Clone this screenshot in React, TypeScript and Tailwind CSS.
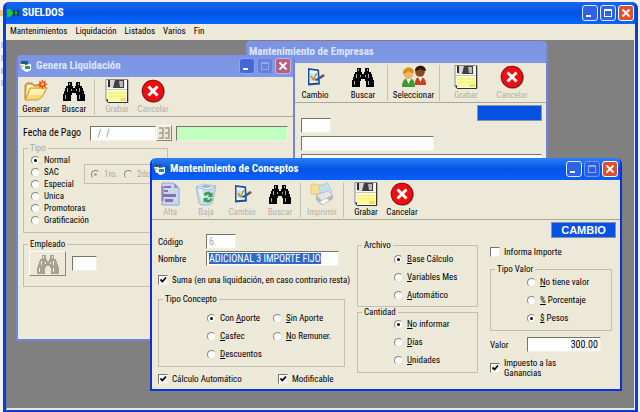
import { useEffect, useRef } from "react";
import type { ReactNode } from "react";

/* ---------- icons ---------- */

function FolderIcon() {
  return (
    <svg width="24" height="24" viewBox="0 0 24 24" aria-hidden="true">
      <path d="M1 20V6l2-2h5l2 2h8v4" fill="#e9b44c" stroke="#a8741c" strokeWidth="0.8" />
      <path d="M3 6h5l2 2h7v4H5l-3 6z" fill="#fff3c4" />
      <path d="M1 21 6 9h17l-5 9-4 3z" fill="#ffd978" stroke="#b98222" strokeWidth="0.8" />
      <path d="M7 10h14l-3 6c-5-1-8 1-13 0z" fill="#ffefb0" />
      <path d="m18.500 0 1 3 2.500-1.500-.8 2.800 2.800.7-2.800 1.200 1 2.800-2.700-1.500-1 3-1-3-2.500 1.500.8-2.800-2.800-1 2.800-.9-1-2.600 2.500 1.300z" fill="#e8481c" />
      <circle cx="18.500" cy="5" r="1.800" fill="#ffc23c" />
    </svg>
  );
}

function BinocularsIcon({ muted = false }: { muted?: boolean }) {
  const body = muted ? "#a5a294" : "#000";
  const gloss = muted ? "#f3f1e6" : "#a9a9a4";
  return (
    <svg width="24" height="24" viewBox="0 0 24 24" aria-hidden="true">
      <path d="M6 3h4v4h1v2h2V7h1V3h4v4h2v2h1v3h1v3h1v7h-8v-6h-1v-2h-4v2H9v6H1v-7h1v-3h1V9h1V7h2z" fill={body} />
      <path d="M7 4h1v2H7zM5 9h1v4H5zM3 16h1v4H3zM16 4h1v2h-1zM17 9h1v4h-1zM17 16h1v4h-1zM9 10h1v2H9zM14 10h1v2h-1z" fill={gloss} />
    </svg>
  );
}

function FloppyIcon() {
  return (
    <svg width="24" height="24" viewBox="0 0 24 24" aria-hidden="true">
      <path d="M1 .5h22v23H3L1 21.500z" fill="#fafaf7" stroke="#8a8a84" />
      <rect x="3.500" y="1" width="16" height="8" fill="#d5d5d2" />
      <path d="M3 1h2v7H3z" fill="#2b2b2b" />
      <path d="M10 1h9v8H8z" fill="#3e3e44" />
      <path d="M14 2h4v6h-3z" fill="#b9b9b9" />
      <path d="M2 10.500h20" stroke="#c5c5bd" />
      <rect x="3" y="12" width="18" height="10" fill="#fdfb9c" />
      <path d="M3 14h18M3 17h18" stroke="#f0ec72" />
      <path d="M16 19h5v3h-6z" fill="#efe24e" />
      <path d="M1 20.500h2v3z" fill="#111" />
      <path d="M22.500 1v22.500H3" fill="none" stroke="#33332f" />
    </svg>
  );
}

function CancelIcon() {
  return (
    <svg width="24" height="24" viewBox="0 0 24 24" aria-hidden="true">
      <circle cx="12.800" cy="12.800" r="11" fill="#8d8b80" />
      <circle cx="12" cy="12" r="11.300" fill="#7d0a0a" />
      <circle cx="12" cy="12" r="10.500" fill="#ee0e12" />
      <path d="m7.500 7.500 9 9m0-9-9 9" stroke="#fff" strokeWidth="3" />
    </svg>
  );
}

function EditIcon() {
  return (
    <svg width="24" height="24" viewBox="0 0 24 24" aria-hidden="true">
      <path d="m5 3 11 1.500 1 15L5 20.500z" fill="#1a4fa3" />
      <path d="m6.500 5 8 1 .7 11.500-8.700.8z" fill="#f4faff" />
      <path d="m7 8 6 .5v7l-6 .5z" fill="#c8e2f5" />
      <path d="m8 11 2.500 4L14 8" fill="none" stroke="#c49016" strokeWidth="1.500" />
      <path d="m11 15 8-5 2 1.500-7 4.500z" fill="#1d5fb4" />
      <path d="m18 10.500 2-1.500 2 1.500-2 2z" fill="#b0492c" />
      <path d="m10 16 1.500-2 1.500 2z" fill="#f0b73a" />
    </svg>
  );
}

function PeopleIcon() {
  return (
    <svg width="26" height="24" viewBox="0 0 26 24" aria-hidden="true">
      <path d="M14 20c0-5 1-8 5-8s6 3 6 8z" fill="#c8401c" />
      <path d="m17 12 2.500 5 2-5z" fill="#fff" />
      <circle cx="19" cy="7" r="4.800" fill="#8a4a21" />
      <path d="M14 6c0-7 11-7 11 0-2 0-4-1-6-2-2 1-3 2-5 2z" fill="#2e1708" />
      <path d="M1 22c0-6 2-8.500 6.500-8.500S14 16 14 22z" fill="#3c9a35" />
      <path d="m5.500 14 2 5 2.500-5z" fill="#fff" />
      <circle cx="7.500" cy="9" r="4.800" fill="#f2b36a" />
      <path d="M2 9c-1-8 11-9 11-1-2 0-4-1-5.500-2C6 8 4 8 2 9z" fill="#dd8c14" />
    </svg>
  );
}

function DocumentIcon() {
  return (
    <svg width="24" height="24" viewBox="0 0 24 24" aria-hidden="true">
      <path d="M4 1h12l5 5v17H4z" fill="#c4d2f4" stroke="#8093d2" />
      <path d="M16 1v5h5z" fill="#6f88dc" />
      <path d="M6 4h7v2H6zM6 8h4v2H6zM4 12h14v3H4zM7 17h8v3H7z" fill="#6a55ae" />
      <path d="M4.500 4v15" stroke="#8c62b2" strokeWidth="2" />
    </svg>
  );
}

function RecycleIcon() {
  return (
    <svg width="24" height="24" viewBox="0 0 24 24" aria-hidden="true">
      <path d="m2 5 20-1-3.500 17L15 23H7l-2-2z" fill="#b7d9ef" stroke="#7fa9cc" strokeWidth="0.800" />
      <path d="m4 7 4 14h4L8 7z" fill="#e2f2fb" />
      <path d="m2 5 7-3 13 2-8 4z" fill="#eff8fd" stroke="#80abd0" strokeWidth="0.800" />
      <path d="m6 5 4-2 8 1-4 2z" fill="#75a4cc" />
      <path d="M9.500 12.500C11 9 16 9 17 11.500l1.500-1.500v5H14l1.200-1.500c-1-1.200-3-1-3.400.5zM18.500 16.500c-.5 4-5 5-7.500 3l-1.500 1.500v-5h5L13 17.500c1.200.8 3 .5 3-1z" fill="#168a30" />
    </svg>
  );
}

function PrinterIcon() {
  return (
    <svg width="24" height="24" viewBox="0 0 24 24" aria-hidden="true">
      <path d="M1 2h5l1 1h4v9H1z" fill="#fbdc82" stroke="#d6aa48" strokeWidth="0.600" />
      <path d="m9 4 9-3 4 9-11 4z" fill="#bfdcf6" stroke="#8fb3d8" strokeWidth="0.600" />
      <path d="m6 13 12-4 5 4-11 6z" fill="#e3e5ea" stroke="#9598a0" strokeWidth="0.600" />
      <path d="M6 13v5l6 5v-4zM12 19l11-6v4l-11 6z" fill="#a9acb6" />
      <path d="m9 20 7-4 4 2-7 5z" fill="#f7f8fb" stroke="#8b9099" strokeWidth="0.500" />
    </svg>
  );
}

function FormIcon() {
  return (
    <svg width="12" height="12" viewBox="0 0 12 12" aria-hidden="true">
      <path d="M1 1h7v6H1z" fill="#1f5a80" />
      <path d="M0 4h5v6H2z" fill="#e8f4f4" />
      <path d="m5 5 6-1v6l-4 2-3-1z" fill="#fff" />
      <path d="M5 6h5v3H5z" fill="#2f8f8f" />
      <path d="M1 5h2v2H1z" fill="#e6cf3c" />
    </svg>
  );
}

function AppIcon() {
  return (
    <svg width="13" height="8" viewBox="0 0 13 8" aria-hidden="true">
      <path d="M0 0h3l3 3v2L3 8H0z" fill="#18c838" />
      <path d="M6 1h2v6H6zM10 1h2v6h-2z" fill="#0d4a3f" />
      <path d="M8 3h2v2H8z" fill="#24b055" />
    </svg>
  );
}

/* ---------- window parts ---------- */

type CaptionKind = "min" | "max" | "close";

const captionName = { min: "Minimizar", max: "Maximizar", close: "Cerrar" };

function CaptionButton({ kind, dim = false, inactive = false }: { kind: CaptionKind; dim?: boolean; inactive?: boolean }) {
  const red = inactive ? "border-[#c5b6df] bg-[#b4607f]" : "border-white bg-[#e0502c]";
  const blue = inactive ? "border-[#8fa5ec] bg-[#4468d6]" : "border-[#dfe9ff] bg-[#2f62e4]";
  const faded = inactive ? "border-[#849ae6] bg-[#6680dc]" : "border-[#6f97f2] bg-[#2a5fe2]";
  return (
    <button
      type="button"
      aria-label={captionName[kind]}
      className={`flex size-4 items-center justify-center rounded-[3px] border ${kind === "close" ? red : dim ? faded : blue}`}
    >
      <svg width="10" height="10" viewBox="0 0 10 10" aria-hidden="true">
        {kind === "min" && <path d="M1 7h5v2H1z" fill="#fff" />}
        {kind === "max" && (
          <path d="M1 1h8v8H1zM2 3v5h6V3z" fillRule="evenodd" fill={dim ? "#8fa9ee" : "#fff"} />
        )}
        {kind === "close" && <path d="m1.500 1.500 7 7m0-7-7 7" stroke="#fff" strokeWidth="1.800" />}
      </svg>
    </button>
  );
}

function ChildWindow({
  place,
  title,
  active = false,
  bare = false,
  children,
}: {
  place: string;
  title: string;
  active?: boolean;
  bare?: boolean;
  children: ReactNode;
}) {
  const frame = active ? "border-[#0831d9]" : "border-[#7581dc]";
  const bar = active
    ? "bg-linear-to-b from-[#2a80f8] via-[#0453e2] to-[#0560fa] text-white"
    : "bg-linear-to-b from-[#7d92e4] via-[#7b96e2] to-[#8099e6] text-[#dce4fa]";
  return (
    <section className={`absolute flex flex-col overflow-hidden rounded-t-md border-x-2 border-b-2 bg-[#ece9d8] ${frame} ${place}`}>
      <header className={`flex h-[22px] shrink-0 items-center gap-1 px-0.5 ${bar}`}>
        {!bare && <FormIcon />}
        <h2 className="flex-1 text-[11px] leading-4 font-bold whitespace-nowrap">{title}</h2>
        {!bare && (
          <div className="flex gap-0.5">
            <CaptionButton kind="min" inactive={!active} />
            <CaptionButton kind="max" dim inactive={!active} />
            <CaptionButton kind="close" inactive={!active} />
          </div>
        )}
      </header>
      {children}
    </section>
  );
}

function Tool({ icon, label, width, disabled = false, faded = false }: { icon: ReactNode; label: string; width: string; disabled?: boolean; faded?: boolean }) {
  return (
    <button
      type="button"
      disabled={disabled}
      className={`flex flex-col items-center leading-3 whitespace-nowrap ${width} ${disabled ? "text-[#b5b2a3]" : "text-black"}`}
    >
      <span className={faded ? "opacity-80" : ""}>{icon}</span>
      {label}
    </button>
  );
}

function Toolbar({ children }: { children: ReactNode }) {
  return (
    <div role="toolbar" className="flex h-10 shrink-0 items-center border-b border-[#aca899]">
      {children}
    </div>
  );
}

function Separator() {
  return <span className="h-9 w-px bg-[#c5c2b2]" />;
}

/* ---------- form parts ---------- */

const field =
  "block h-[15px] border border-t-[#77756a] border-l-[#77756a] border-r-[#f1efe2] border-b-[#f1efe2] bg-white px-0.5 text-[10px] outline-none";

function Choice({ name, children, checked = false, disabled = false }: { name: string; children: ReactNode; checked?: boolean; disabled?: boolean }) {
  return (
    <label className={`flex items-center gap-1 whitespace-nowrap ${disabled ? "text-[#aca899]" : ""}`}>
      <input
        type="radio"
        name={name}
        defaultChecked={checked}
        disabled={disabled}
        className="flex size-[9px] shrink-0 appearance-none items-center justify-center rounded-full border border-t-[#8a887c] border-r-[#e6e3d3] border-b-[#e6e3d3] border-l-[#8a887c] bg-white before:size-[3px] before:rounded-full checked:before:bg-black disabled:bg-[#ece9d8] disabled:checked:before:bg-[#aca899]"
      />
      <span>{children}</span>
    </label>
  );
}

function Tick({ children, checked = false }: { children: ReactNode; checked?: boolean }) {
  return (
    <label className="flex items-center gap-1 whitespace-nowrap">
      <span className="relative flex size-2.5 shrink-0">
        <input
          type="checkbox"
          defaultChecked={checked}
          className="peer size-2.5 appearance-none border border-t-[#77756a] border-r-[#f1efe2] border-b-[#f1efe2] border-l-[#77756a] bg-white"
        />
        <svg viewBox="0 0 10 10" className="pointer-events-none absolute inset-0 hidden peer-checked:block" aria-hidden="true">
          <path d="m2.500 4.500 2 2 3.500-4" fill="none" stroke="#000" strokeWidth="1.800" />
        </svg>
      </span>
      <span>{children}</span>
    </label>
  );
}

function Group({ title, className = "", muted = false, children }: { title: string; className?: string; muted?: boolean; children: ReactNode }) {
  return (
    <fieldset className={`border border-[#c2bfae] ${className}`}>
      <legend className={`ml-1 px-0.5 leading-[10px] ${muted ? "text-[#aca899]" : ""}`}>{title}</legend>
      {children}
    </fieldset>
  );
}

/* ---------- windows ---------- */

function Empresas() {
  return (
    <ChildWindow place="top-px left-[238px] h-[200px] w-[303px]" title="Mantenimiento de Empresas" bare>
      <Toolbar>
        <span className="w-11" />
        <Tool icon={<EditIcon />} label="Cambio" width="w-12" />
        <Tool icon={<BinocularsIcon />} label="Buscar" width="w-12" />
        <Separator />
        <Tool icon={<PeopleIcon />} label="Seleccionar" width="w-[51px]" />
        <Separator />
        <Tool icon={<FloppyIcon />} label="Grabar" width="w-[52px]" disabled />
        <Tool icon={<CancelIcon />} label="Cancelar" width="w-10" disabled />
      </Toolbar>
      <div className="flex flex-col gap-[3px] pt-0.5 pr-1 pl-[54px]">
        <div className="flex items-end justify-between">
          <input aria-label="Código de empresa" className={`${field} mt-3 w-[30px]`} />
          <div className="mb-3 h-4 w-[65px] border border-[#8592a8] bg-[#0451e4]" />
        </div>
        <input aria-label="Nombre de empresa" className={`${field} w-[133px]`} />
        <input aria-label="Domicilio" className={`${field} w-full`} />
      </div>
    </ChildWindow>
  );
}

function GeneraLiquidacion() {
  return (
    <ChildWindow place="top-[15px] left-[9px] h-[286px] w-[279px]" title="Genera Liquidación">
      <Toolbar>
        <Tool icon={<FolderIcon />} label="Generar" width="w-9" />
        <Tool icon={<BinocularsIcon />} label="Buscar" width="w-10" />
        <Separator />
        <Tool icon={<FloppyIcon />} label="Grabar" width="w-11" disabled />
        <Tool icon={<CancelIcon />} label="Cancelar" width="w-7" disabled />
      </Toolbar>
      <form className="flex flex-col px-[5px] pt-2">
        <div className="flex h-4 items-center">
          <label htmlFor="fecha" className="w-[67px] text-[10px]">
            Fecha de Pago
          </label>
          <input id="fecha" defaultValue="  /  /" className={`${field} w-[66px] whitespace-pre text-[#8a887c]`} />
          <button
            type="button"
            aria-label="Calendario"
            className="mr-1 flex size-4 items-center justify-center border border-t-white border-r-[#8a887c] border-b-[#8a887c] border-l-white bg-[#ece9d8]"
          >
            <svg width="12" height="12" viewBox="0 0 12 12" aria-hidden="true">
              <path d="M1 1h4v10H1M1 6h4M7 1h4v10H7M7 6h4" fill="none" stroke="#a09d8e" strokeWidth="1.500" />
            </svg>
          </button>
          <input aria-label="Período" readOnly className="block h-[15px] min-w-0 flex-1 border border-t-[#77756a] border-r-[#f1efe2] border-b-[#f1efe2] border-l-[#77756a] bg-[#c0ffc0]" />
        </div>
        <Group title="Tipo" className="mt-0.5 h-[90px] w-[145px]" muted>
          <div className="flex items-start pt-px pl-[7px] leading-3">
            <div className="flex w-[53px] flex-col">
              <Choice name="tipo" checked>Normal</Choice>
              <Choice name="tipo">SAC</Choice>
              <Choice name="tipo">Especial</Choice>
              <Choice name="tipo">Unica</Choice>
              <Choice name="tipo">Promotoras</Choice>
              <Choice name="tipo">Gratificación</Choice>
            </div>
            <div className="mt-2.5 flex h-5 w-20 items-center gap-1.5 border border-[#c2bfae] pl-1.5">
              <Choice name="cuota" checked disabled>1ro.</Choice>
              <Choice name="cuota" disabled>2do.</Choice>
            </div>
          </div>
        </Group>
        <Group title="Empleado" className="mt-1.5 h-12">
          <div className="flex items-center gap-1.5 pt-0.5 pl-[5px]">
            <button
              type="button"
              aria-label="Buscar empleado"
              className="flex h-[25px] w-[37px] items-center justify-center border border-t-white border-r-[#8a887c] border-b-[#8a887c] border-l-white"
            >
              <BinocularsIcon muted />
            </button>
            <input aria-label="Empleado" className={`${field} w-[25px]`} />
          </div>
        </Group>
      </form>
    </ChildWindow>
  );
}

function Conceptos() {
  const nombre = useRef<HTMLInputElement>(null);

  useEffect(() => {
    nombre.current?.focus();
    nombre.current?.select();
  }, []);

  return (
    <ChildWindow place="top-[118px] left-[143px] h-[233px] w-[472px]" title="Mantenimiento de Conceptos" active>
      <Toolbar>
        <Tool icon={<DocumentIcon />} label="Alta" width="w-9" disabled faded />
        <Tool icon={<RecycleIcon />} label="Baja" width="w-9" disabled faded />
        <Tool icon={<EditIcon />} label="Cambio" width="w-9" disabled />
        <Tool icon={<BinocularsIcon />} label="Buscar" width="w-10" disabled />
        <Separator />
        <Tool icon={<PrinterIcon />} label="Imprimir" width="w-[42px]" disabled faded />
        <Separator />
        <Tool icon={<FloppyIcon />} label="Grabar" width="w-11" />
        <Tool icon={<CancelIcon />} label="Cancelar" width="w-7" />
      </Toolbar>
      <form className="flex items-start pt-0.5 pr-1 pl-1.5">
        <div className="flex w-[199px] flex-col pt-3">
          <div className="flex items-center">
            <label htmlFor="codigo" className="w-12">Código</label>
            <input id="codigo" defaultValue="6" disabled className={`${field} w-[30px] text-[#aca899]`} />
          </div>
          <div className="mt-0.5 flex items-center">
            <label htmlFor="nombre" className="w-12">Nombre</label>
            <input
              id="nombre"
              ref={nombre}
              defaultValue="ADICIONAL 3 IMPORTE FIJO"
              className={`${field} w-[133px] selection:bg-[#316ac5] selection:text-white`}
            />
          </div>
          <div className="mt-2">
            <Tick checked>Suma (en una liquidación, en caso contrario resta)</Tick>
          </div>
          <Group title="Tipo Concepto" className="mt-2 mr-3">
            <div className="grid grid-cols-[66px_auto] pt-[5px] pb-[3px] pl-12 leading-[18px]">
              <Choice name="concepto" checked>Con <u>A</u>porte</Choice>
              <Choice name="concepto"><u>S</u>in Aporte</Choice>
              <Choice name="concepto"><u>C</u>asfec</Choice>
              <Choice name="concepto"><u>N</u>o Remuner.</Choice>
              <Choice name="concepto"><u>D</u>escuentos</Choice>
            </div>
          </Group>
          <div className="mt-1.5 flex">
            <div className="w-[120px]"><Tick checked>Cálculo Automático</Tick></div>
            <Tick checked>Modificable</Tick>
          </div>
        </div>
        <div className="flex w-[121px] flex-col pt-[18px]">
          <Group title="Archivo">
            <div className="flex flex-col pb-0.5 pl-9 leading-[18px]">
              <Choice name="archivo" checked><u>B</u>ase Cálculo</Choice>
              <Choice name="archivo"><u>V</u>ariables Mes</Choice>
              <Choice name="archivo"><u>A</u>utomático</Choice>
            </div>
          </Group>
          <Group title="Cantidad">
            <div className="-mt-0.5 flex flex-col pb-[3px] pl-9 leading-[18px]">
              <Choice name="cantidad" checked><u>N</u>o informar</Choice>
              <Choice name="cantidad"><u>D</u>ías</Choice>
              <Choice name="cantidad"><u>U</u>nidades</Choice>
            </div>
          </Group>
        </div>
        <div className="flex flex-1 flex-col pl-3">
          <output className="flex h-4 w-[65px] items-center justify-center self-end border border-[#8592a8] bg-[#0451e4] font-['Liberation_Sans',sans-serif] text-[11px] font-bold text-white">
            CAMBIO
          </output>
          <div className="mt-2"><Tick>Informa Importe</Tick></div>
          <Group title="Tipo Valor" className="mt-1.5 mr-1">
            <div className="-mt-px flex flex-col pb-[3px] pl-9 leading-[18px]">
              <Choice name="valor"><u>N</u>o tiene valor</Choice>
              <Choice name="valor"><u>%</u> Porcentaje</Choice>
              <Choice name="valor" checked><u>$</u> Pesos</Choice>
            </div>
          </Group>
          <div className="mt-1.5 flex items-center">
            <label htmlFor="valor" className="w-[37px]">Valor</label>
            <input id="valor" defaultValue="300.00" className={`${field} w-[74px] text-right`} />
          </div>
          <div className="mt-1.5 leading-[10px]">
            <Tick checked>Impuesto a las<br />Ganancias</Tick>
          </div>
        </div>
      </form>
    </ChildWindow>
  );
}

/* ---------- main window ---------- */

const menus = ["Mantenimientos", "Liquidación", "Listados", "Varios", "Fin"];

export default function App() {
  return (
    <div className="relative flex min-h-screen bg-[#f2f1f4] pt-0.5 pr-0.5 pl-[3px] font-['Arial_Narrow','Roboto_Condensed','Lato',sans-serif] text-[9px] leading-3 text-black">
      <svg width="3" height="100" viewBox="0 0 3 100" className="absolute top-0 left-0" aria-hidden="true">
        <path d="M0 10h3v6H0z" fill="#e5c97c" />
        <path d="M1 42h2v6H1zM1 55h2v6H1zM1 68h2v6H1zM1 80h2v6H1z" fill="#b9c4f2" />
      </svg>
      <main className="flex flex-1 flex-col rounded-t-md border-x-[3px] border-b-2 border-[#0a3fd0] bg-[#0453e2]">
        <header className="flex h-[22px] items-center gap-0.5 rounded-t bg-linear-to-b from-[#1668f0] via-[#0453e2] to-[#0566ff] px-px text-white">
          <AppIcon />
          <h1 className="flex-1 text-[11px] leading-4 font-bold">SUELDOS</h1>
          <div className="flex gap-0.5">
            <CaptionButton kind="min" />
            <CaptionButton kind="max" />
            <CaptionButton kind="close" />
          </div>
        </header>
        <nav className="flex h-4 items-center gap-2 bg-[#ece9d8] pb-0.5 pl-1">
          {menus.map((m) => (
            <button key={m} type="button">{m}</button>
          ))}
        </nav>
        <div className="relative flex-1 overflow-hidden border-r border-b-2 border-l border-[#e8e8ee] border-l-[#6f7690] bg-[#808080]">
          <Empresas />
          <GeneraLiquidacion />
          <Conceptos />
        </div>
      </main>
    </div>
  );
}
